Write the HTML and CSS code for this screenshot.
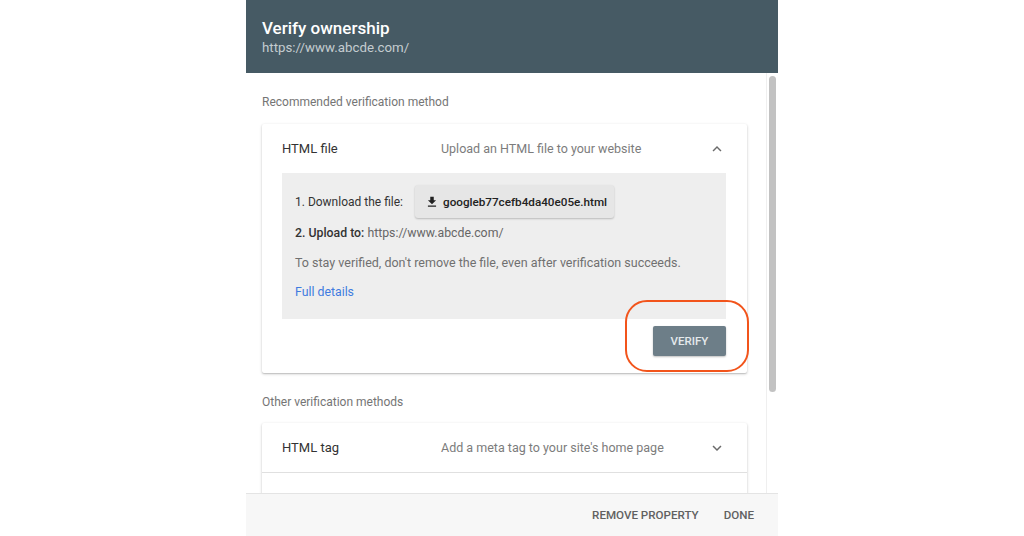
FILE: index.html
```html
<!DOCTYPE html>
<html>
<head>
<meta charset="utf-8">
<link rel="stylesheet" href="styles.css">
</head>
<body>
<div class="dialog">
  <div class="dlg-header">
    <div class="dlg-title">Verify ownership</div>
    <div class="dlg-url">https://www.abcde.com/</div>
  </div>
  <div class="dlg-body">
    <div class="content">
      <div class="section-label">Recommended verification method</div>
      <div class="card">
        <div class="card-head">
          <div class="method">HTML file</div>
          <div class="method-desc">Upload an HTML file to your website</div>
          <svg class="chev" viewBox="0 0 24 24"><path d="M12 8l-6 6 1.41 1.41L12 10.83l4.59 4.58L18 14z"/></svg>
        </div>
        <div class="panel">
          <div class="row-dl">
            <span>1. Download the file:</span>
            <span class="file-btn">
              <svg class="dl-icon" viewBox="0 0 24 24"><path d="M19 9h-4V3H9v6H5l7 7 7-7zM5 18v2h14v-2H5z"/></svg>
              googleb77cefb4da40e05e.html
            </span>
          </div>
          <div class="row row-up"><span class="strong">2. Upload to:</span> https://www.abcde.com/</div>
          <div class="row row-stay">To stay verified, don't remove the file, even after verification succeeds.</div>
          <div class="row row-link"><span class="link">Full details</span></div>
        </div>
        <div class="actions">
          <div class="verify-wrap">
            <span class="verify-btn">VERIFY</span>
            <span class="ring"></span>
          </div>
        </div>
      </div>
      <div class="section-label other">Other verification methods</div>
      <div class="card card2">
        <div class="card-head">
          <div class="method">HTML tag</div>
          <div class="method-desc">Add a meta tag to your site's home page</div>
          <svg class="chev" viewBox="0 0 24 24"><path d="M16.59 8.59L12 13.17 7.41 8.59 6 10l6 6 6-6z"/></svg>
        </div>
        <div class="card-next"></div>
      </div>
    </div>
    <div class="scrolltrack"><div class="thumb"></div></div>
  </div>
  <div class="dlg-footer">
    <span class="fbtn">REMOVE PROPERTY</span>
    <span class="fbtn">DONE</span>
  </div>
</div>
</body>
</html>
```
FILE: styles.css
```css
* { box-sizing: border-box; }
html, body { margin: 0; padding: 0; background: #ffffff; }
body {
  font-family: Roboto, "Liberation Sans", Arial, sans-serif;
  height: 536px;
  overflow: hidden;
  display: flex;
  justify-content: center;
}
.dialog {
  width: 532px;
  height: 536px;
  display: flex;
  flex-direction: column;
  background: #fff;
}
.dlg-header {
  height: 73px;
  flex: none;
  background: #465a64;
  padding: 17px 16px 0;
}
.dlg-title {
  color: #ffffff;
  font-size: 17px;
  line-height: 22px;
  font-weight: 500;
}
.dlg-url {
  color: #c4ccd0;
  font-size: 13.3px;
  line-height: 18px;
}
.dlg-body {
  flex: 1;
  display: flex;
  overflow: hidden;
  min-height: 0;
}
.content {
  flex: 1;
  padding: 20px 19px 0 16px;
  overflow: hidden;
}
.section-label {
  font-size: 12px;
  line-height: 18px;
  color: #757575;
}
.section-label.other { margin-top: 20px; }
.card {
  margin-top: 13px;
  background: #fff;
  border-radius: 2px;
  box-shadow: 0 1px 3px rgba(0,0,0,0.22), 0 1px 1px rgba(0,0,0,0.10);
  padding: 0 21px 17px 20px;
}
.card.card2 { padding-bottom: 0; margin-top: 12px; }
.card-head {
  height: 49px;
  display: flex;
  align-items: center;
}
.method {
  width: 159px;
  font-size: 13px;
  color: #333333;
}
.method-desc {
  flex: 1;
  font-size: 12.5px;
  color: #7c7c7c;
}
.chev {
  width: 18px;
  height: 18px;
  fill: #6b6b6b;
}
.panel {
  background: #eeeeee;
  padding: 12px 13px 18px;
  font-size: 12.3px;
  color: #333;
}
.row-dl {
  display: flex;
  align-items: center;
  gap: 12px;
  font-size: 12px;
}
.file-btn {
  height: 33px;
  display: inline-flex;
  align-items: center;
  gap: 4px;
  padding: 0 7px 0 10px;
  background: #e6e6e6;
  border-radius: 3px;
  box-shadow: 0 1px 2px rgba(0,0,0,0.22);
  font-size: 11.7px;
  font-weight: 500;
  color: #222;
}
.dl-icon { width: 14px; height: 14px; fill: #222; }
.row { line-height: 18px; }
.row-up { margin-top: 6px; color: #666; }
.row-up .strong { color: #333; font-weight: 500; }
.row-stay { margin-top: 12px; color: #707070; font-size: 12.5px; }
.row-link { margin-top: 11px; }
.link { color: #3f7be0; }
.actions {
  display: flex;
  justify-content: flex-end;
  margin-top: 7px;
}
.verify-wrap { position: relative; }
.verify-btn {
  display: flex;
  align-items: center;
  justify-content: center;
  width: 73px;
  height: 30px;
  background: #6d7e88;
  color: #e4e9ec;
  font-size: 11.5px;
  font-weight: 500;
  border-radius: 2px;
  box-shadow: 0 1px 2px rgba(0,0,0,0.25);
}
.ring {
  position: absolute;
  left: -28px;
  right: -23px;
  top: -26px;
  bottom: -16px;
  border: 2.5px solid #f2541b;
  border-radius: 22px;
}
.card-next {
  height: 60px;
  border-top: 1px solid #e0e0e0;
  margin: 0 -21px 0 -20px;
}
.scrolltrack {
  width: 12px;
  flex: none;
  border-left: 1px solid #efefef;
  padding: 3px 2px 0 2px;
}
.thumb {
  width: 7px;
  height: 316px;
  background: #c2c2c2;
  border-radius: 4px;
}
.dlg-footer {
  height: 43px;
  flex: none;
  background: #f7f7f7;
  border-top: 1px solid #e4e4e4;
  display: flex;
  justify-content: flex-end;
  align-items: center;
  gap: 25px;
  padding-right: 24px;
}
.fbtn {
  font-size: 11.6px;
  font-weight: 500;
  color: #616161;
}
```
